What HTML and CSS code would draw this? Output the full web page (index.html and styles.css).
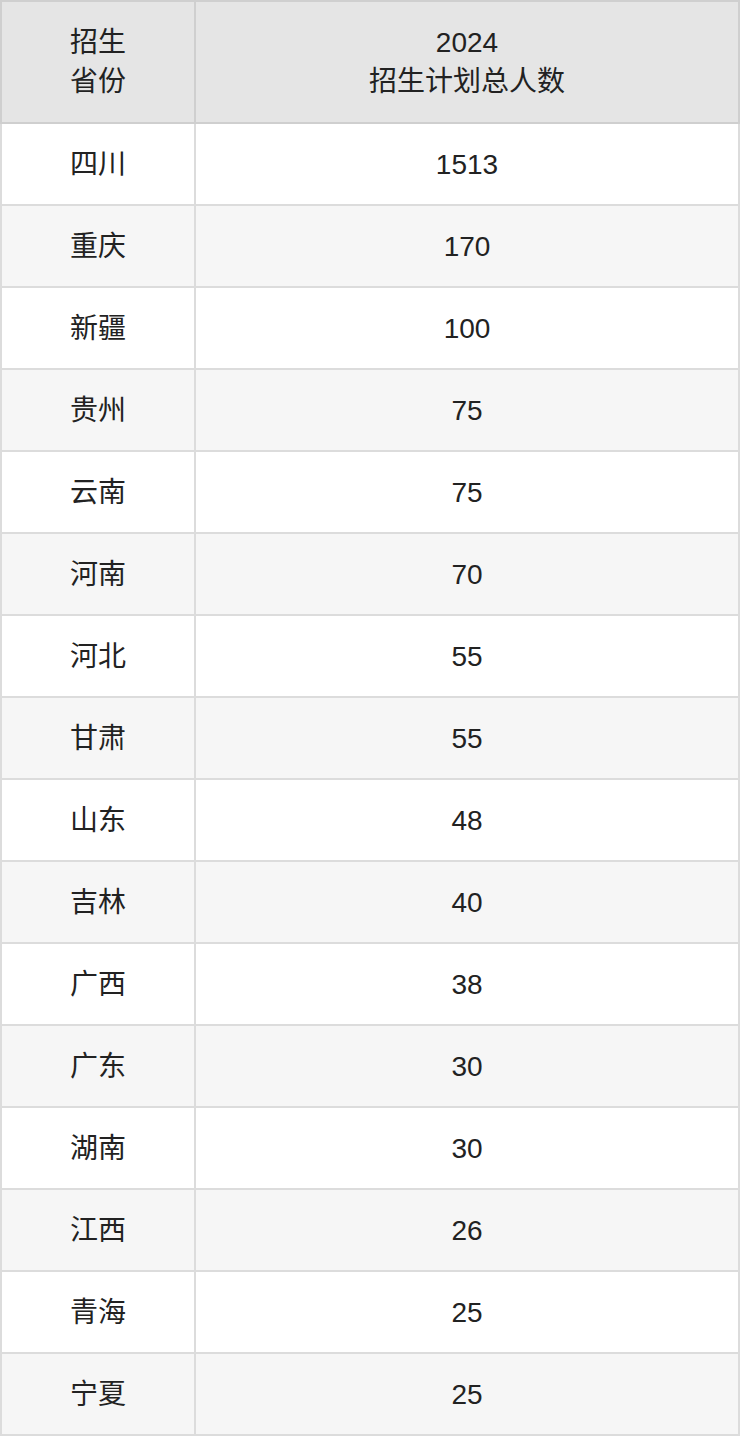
FILE: index.html
```html
<!DOCTYPE html>
<html lang="zh-CN">
<head>
<meta charset="utf-8">
<title>招生计划</title>
<link rel="stylesheet" href="styles.css">
</head>
<body>
<table class="plan">
  <thead>
    <tr>
      <th class="col-prov">招生<br>省份</th>
      <th class="col-num">2024<br>招生计划总人数</th>
    </tr>
  </thead>
  <tbody>
    <tr><td>四川</td><td>1513</td></tr>
    <tr><td>重庆</td><td>170</td></tr>
    <tr><td>新疆</td><td>100</td></tr>
    <tr><td>贵州</td><td>75</td></tr>
    <tr><td>云南</td><td>75</td></tr>
    <tr><td>河南</td><td>70</td></tr>
    <tr><td>河北</td><td>55</td></tr>
    <tr><td>甘肃</td><td>55</td></tr>
    <tr><td>山东</td><td>48</td></tr>
    <tr><td>吉林</td><td>40</td></tr>
    <tr><td>广西</td><td>38</td></tr>
    <tr><td>广东</td><td>30</td></tr>
    <tr><td>湖南</td><td>30</td></tr>
    <tr><td>江西</td><td>26</td></tr>
    <tr><td>青海</td><td>25</td></tr>
    <tr><td>宁夏</td><td>25</td></tr>
  </tbody>
</table>
</body>
</html>
```

FILE: styles.css
```css
html, body {
  margin: 0;
  padding: 0;
  background: #ffffff;
}

.plan {
  width: 740px;
  border-collapse: collapse;
  table-layout: fixed;
  font-family: "Liberation Sans", "Noto Sans CJK SC", sans-serif;
  font-size: 28px;
  line-height: 39px;
  color: #222222;
}

.plan th,
.plan td {
  padding: 0;
  text-align: center;
  vertical-align: middle;
  font-weight: normal;
}

.plan th {
  height: 120px;
  background: #e5e5e5;
  border: 2px solid #cfcfcf;
}

.plan td {
  height: 80px;
  border: 2px solid #dcdcdc;
}

.col-prov {
  width: 192px;
}

.plan tbody tr:nth-child(odd) td {
  background: #ffffff;
}

.plan tbody tr:nth-child(even) td {
  background: #f6f6f6;
}
```
